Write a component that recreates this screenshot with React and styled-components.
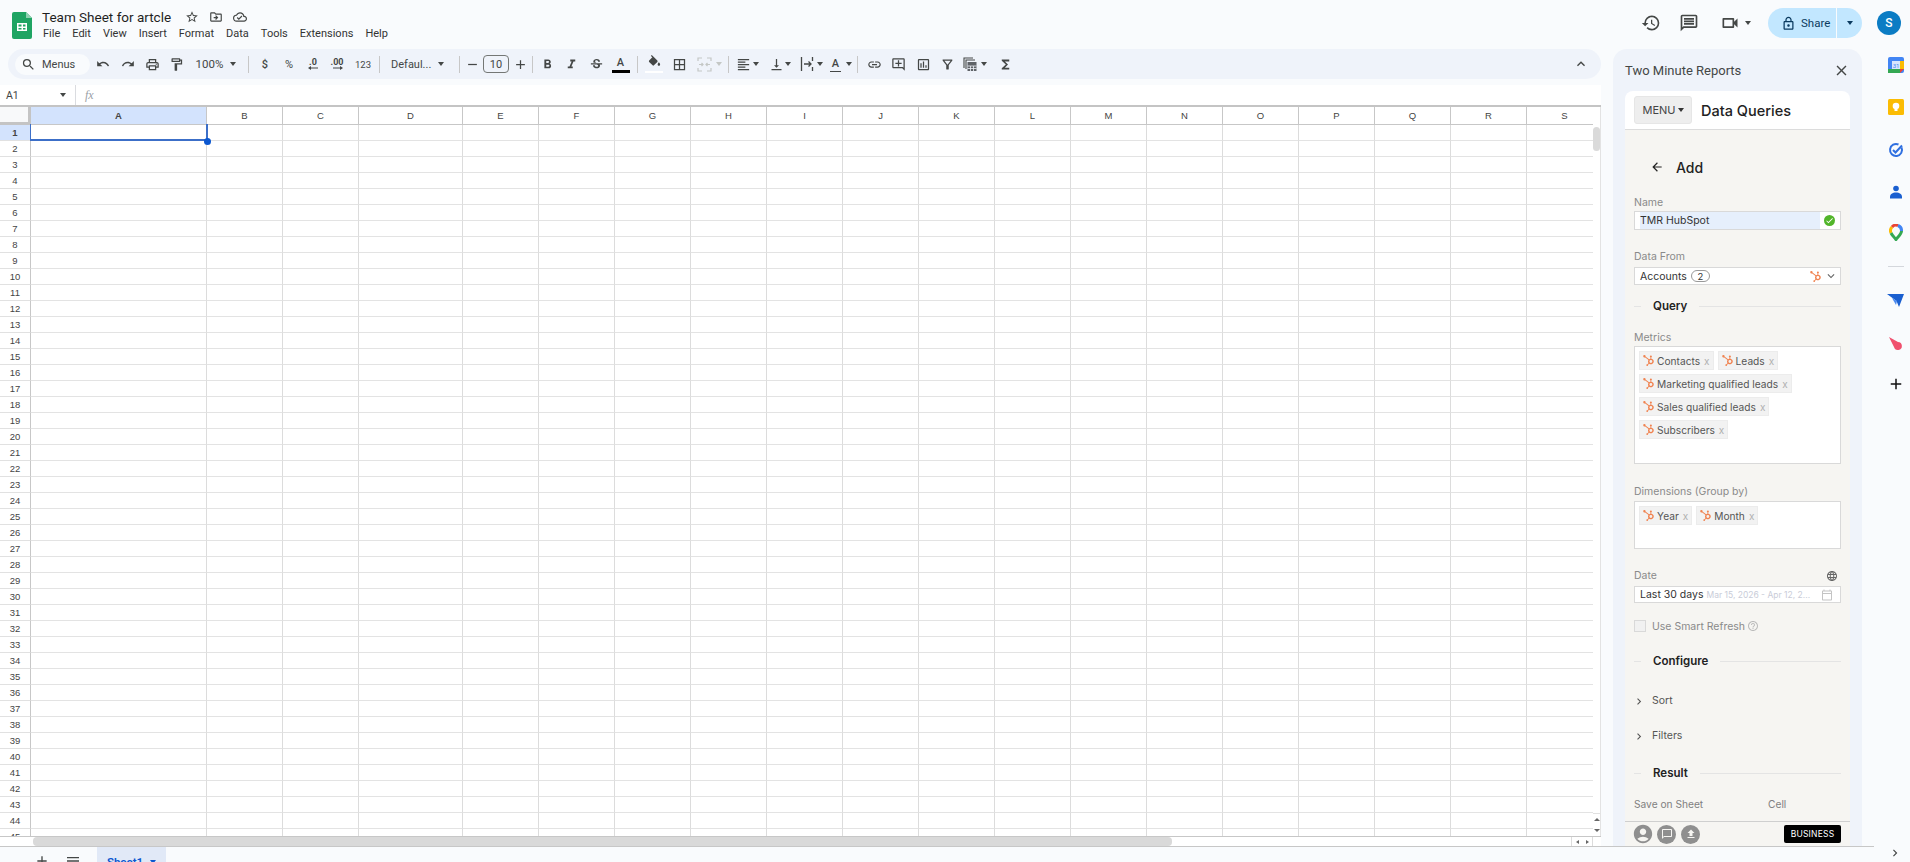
import React from 'react';
import styled, { createGlobalStyle } from 'styled-components';
import {
  MdAdd, MdArrowBack, MdClose, MdExpandLess, MdFormatAlignLeft, MdFormatBold,
  MdFormatItalic, MdBorderAll, MdFunctions, MdHistory, MdKeyboardArrowDown, MdKeyboardArrowRight,
  MdLink, MdAccountCircle, MdOutlineAddComment, MdOutlineCalendarToday, MdOutlineCloudDone,
  MdOutlineDriveFileMove, MdOutlineFilterAlt, MdOutlineFormatPaint, MdOutlineHelpOutline,
  MdOutlineInsertChart, MdOutlineLanguage, MdOutlineLock, MdOutlineMessage, MdOutlinePrint,
  MdOutlineVideocam, MdOutlineVerticalAlignBottom, MdRedo, MdRemove, MdSearch, MdStarBorder,
  MdStrikethroughS, MdUndo, MdCheck, MdMenu, MdFileUpload, MdChatBubbleOutline,
} from 'react-icons/md';
import { SiHubspot } from 'react-icons/si';

const GlobalStyle = createGlobalStyle`
  html, body { margin: 0; padding: 0; height: 862px; overflow: hidden; }
  body { font-family: Roboto, "Liberation Sans", sans-serif; background: #f9fbfd; }
  * { box-sizing: border-box; }
`;

const Page = styled.div`
  width: 1910px;
  height: 862px;
  display: flex;
  flex-direction: column;
  overflow: hidden;
  background: #f9fbfd;
  color: #444746;
`;

/* ---- top header ---- */
const Header = styled.header`
  height: 49px;
  flex: none;
  display: flex;
  align-items: flex-start;
  padding-left: 12px;
`;
const LogoSlot = styled.div`
  margin-top: 12px;
`;
const TitleBlock = styled.div`
  margin-left: 10px;
  padding-top: 8px;
`;
const TitleRow = styled.div`
  display: flex;
  align-items: center;
  height: 18px;
`;
const DocTitle = styled.div`
  font-size: 13.5px;
  color: #1f1f1f;
  width: 138px;
  white-space: nowrap;
`;
const TitleIcon = styled.span`
  width: 24px;
  display: flex;
  justify-content: center;
  font-size: 14px;
  color: #444746;
`;
const MenuRow = styled.nav`
  display: flex;
  gap: 12px;
  padding-left: 1px;
  font-size: 11px;
  line-height: 16px;
  color: #333;
`;
const HeaderRight = styled.div`
  margin-left: auto;
  display: flex;
  align-items: center;
  height: 46px;
  padding-right: 9px;
`;
const HeadIcon = styled.span`
  display: flex;
  align-items: center;
  justify-content: center;
  width: ${(p) => p.$w || 38}px;
  font-size: ${(p) => p.$size || 20}px;
  gap: 5px;
  color: #444746;
`;
const ShareButton = styled.div`
  width: 94px;
  height: 30px;
  margin-left: 6px;
  background: #c2e7ff;
  border-radius: 15px;
  display: flex;
  align-items: center;
  font-size: 11.5px;
  color: #0b3b60;
`;
const ShareMain = styled.div`
  width: 69px;
  height: 30px;
  display: flex;
  align-items: center;
  padding-left: 13px;
  gap: 5px;
  border-right: 1px solid #f9fbfd;
`;
const ShareCaret = styled.div`
  flex: 1;
  display: flex;
  justify-content: center;
`;
const Avatar = styled.div`
  width: 24px;
  height: 24px;
  margin-left: 15px;
  border-radius: 50%;
  background: #0b7cc4;
  color: #fff;
  font-size: 12px;
  font-weight: 500;
  display: flex;
  align-items: center;
  justify-content: center;
`;
const Caret = styled.span`
  display: inline-block;
  width: 0;
  height: 0;
  flex: none;
  border-left: 3.5px solid transparent;
  border-right: 3.5px solid transparent;
  border-top: 4px solid ${(p) => p.$color || '#444746'};
`;

/* ---- main row ---- */
const Main = styled.div`
  height: 797px;
  flex: none;
  display: flex;
`;
const SheetColumn = styled.div`
  width: 1601px;
  flex: none;
  display: flex;
  flex-direction: column;
`;
const Toolbar = styled.div`
  height: 30px;
  flex: none;
  margin-left: 8px;
  background: #eff3fa;
  border-radius: 15px;
  display: flex;
  align-items: center;
  padding-left: 7px;
  position: relative;
`;
const SearchPill = styled.div`
  width: 75px;
  height: 21px;
  background: #f9fbfd;
  border-radius: 11px;
  display: flex;
  align-items: center;
  padding-left: 6px;
  gap: 6px;
  font-size: 11px;
  color: #444746;
  margin-right: 1px;
  svg { font-size: 15px; }
`;
const Tool = styled.span`
  width: ${(p) => p.$w || 24}px;
  margin-left: ${(p) => p.$ml || 0}px;
  height: 22px;
  flex: none;
  display: flex;
  align-items: center;
  justify-content: ${(p) => p.$left ? 'flex-start' : 'center'};
  gap: ${(p) => p.$gap ?? 3}px;
  font-size: ${(p) => p.$size || 15}px;
  color: ${(p) => p.$muted ? '#c4c7c5' : '#444746'};
`;
const ToolText = styled.span`
  font-size: ${(p) => p.$size || 11}px;
  font-weight: ${(p) => p.$weight || 400};
  color: #444746;
  white-space: nowrap;
`;
const Sep = styled.span`
  width: 1px;
  height: 17px;
  flex: none;
  background: #c7c7c7;
  margin: 0 ${(p) => p.$r ?? 4}px 0 ${(p) => p.$l ?? 4}px;
`;
const FontSizeBox = styled.span`
  width: 26px;
  height: 18px;
  flex: none;
  margin-left: 1px;
  border: 1px solid #747775;
  border-radius: 4px;
  font-size: 11px;
  color: #444746;
  display: flex;
  align-items: center;
  justify-content: center;
`;
const ColorA = styled.span`
  display: flex;
  flex-direction: column;
  align-items: center;
  font-size: 11px;
  font-weight: 500;
  line-height: 13px;
  color: #444746;
`;
const ColorBar = styled.span`
  width: ${(p) => p.$w || 18}px;
  height: ${(p) => p.$h || 3}px;
  margin-top: 1px;
  background: ${(p) => p.$color || '#000'};
`;
const Decimal = styled.span`
  display: flex;
  flex-direction: column;
  align-items: center;
  font-size: 9px;
  font-weight: 700;
  line-height: 8px;
  color: #444746;
`;
const CollapseBtn = styled.span`
  position: absolute;
  right: 12px;
  top: 7px;
  font-size: 16px;
  color: #444746;
  display: flex;
`;
const FormulaBar = styled.div`
  height: 22px;
  flex: none;
  margin-top: 6px;
  background: #fff;
  border-bottom: 2px solid #c4c4c4;
  display: flex;
  align-items: center;
  font-size: 10.5px;
  color: #444;
`;
const CellName = styled.div`
  width: 76px;
  height: 20px;
  padding: 0 9px 0 6px;
  display: flex;
  align-items: center;
  justify-content: space-between;
  border-right: 1px solid #dadce0;
`;
const Fx = styled.span`
  margin-left: 9px;
  font-family: "Liberation Serif", serif;
  font-style: italic;
  font-size: 12px;
  color: #9aa0a6;
`;

/* ---- grid ---- */
const GridRow = styled.div`
  flex: 1;
  min-height: 0;
  display: flex;
`;
const Cells = styled.div`
  width: 1593px;
  flex: none;
  overflow: hidden;
  background: #fff;
  display: grid;
  grid-template-columns: 31px 176px 76px 76px 104px repeat(15, 76px);
  grid-template-rows: 18px repeat(45, 16px);
  font-family: "Liberation Sans", Arial, sans-serif;
`;
const ColHead = styled.div`
  display: flex;
  align-items: center;
  justify-content: center;
  font-size: 9.5px;
  font-weight: ${(p) => p.$active ? 700 : 400};
  color: #444;
  background: ${(p) => p.$active ? '#d3e3fd' : '#fff'};
  border-right: 1px solid #c7c7c7;
  border-bottom: 1px solid #c7c7c7;
`;
const Corner = styled.div`
  background: #f8f9fa;
  border-right: 3px solid #c4c4c4;
  border-bottom: 3px solid #c4c4c4;
`;
const RowHead = styled.div`
  display: flex;
  align-items: center;
  justify-content: center;
  font-size: 9.5px;
  font-weight: ${(p) => p.$active ? 700 : 400};
  color: #444;
  background: ${(p) => p.$active ? '#d3e3fd' : '#fff'};
  border-right: 1px solid #c7c7c7;
  border-bottom: 1px solid #e1e1e1;
`;
const Cell = styled.div`
  border-right: 1px solid #dcdcdc;
  border-bottom: 1px solid #e3e3e3;
`;
const SelectedCell = styled(Cell)`
  position: relative;
  overflow: visible;
  z-index: 2;
  &::before {
    content: '';
    position: absolute;
    inset: -1px -2px -1px -1px;
    border: 2px solid #3c6fc8;
    border-top-width: 0;
    border-left-width: 1px;
  }
  &::after {
    content: '';
    position: absolute;
    right: -5px;
    bottom: -5px;
    width: 7px;
    height: 7px;
    border-radius: 50%;
    background: #0b57d0;
  }
`;
const VScroll = styled.div`
  flex: 1;
  background: #fff;
  border-right: 1px solid #e3e3e3;
  padding-top: 20px;
  display: flex;
  flex-direction: column;
`;
const VThumb = styled.div`
  width: 7px;
  height: 24px;
  border-radius: 4px;
  background: #dadada;
`;
const ScrollArrows = styled.div`
  margin-top: auto;
  height: 23px;
  display: flex;
  flex-direction: column;
  align-items: center;
  justify-content: space-around;
  border-top: 1px solid #e1e1e1;
`;
const HScroll = styled.div`
  height: 10px;
  flex: none;
  display: flex;
  align-items: center;
  background: #fff;
  border-top: 1px solid #c7c7c7;
  padding-left: 33px;
`;
const HThumb = styled.div`
  width: 1139px;
  height: 9px;
  border-radius: 4px;
  background: #d9d9d9;
`;
const HArrows = styled.div`
  margin-left: auto;
  margin-right: 8px;
  width: 22px;
  height: 9px;
  display: flex;
  align-items: center;
  justify-content: space-around;
  border-left: 1px solid #dcdcdc;
  border-right: 1px solid #dcdcdc;
`;
const Tiny = styled.span`
  width: 0;
  height: 0;
  border-top: 2.5px solid transparent;
  border-bottom: 2.5px solid transparent;
  border-${(p) => p.$dir === 'left' ? 'right' : 'left'}: 3px solid #666;
`;
const TinyV = styled.span`
  width: 0;
  height: 0;
  border-left: 3px solid transparent;
  border-right: 3px solid transparent;
  border-${(p) => p.$dir === 'up' ? 'bottom' : 'top'}: 3px solid #666;
`;

/* ---- add-on panel ---- */
const Panel = styled.aside`
  width: 249px;
  flex: none;
  margin-left: 12px;
  padding: 0 12px;
  background: #eff3fa;
  border-radius: 14px 14px 0 0;
  display: flex;
  flex-direction: column;
`;
const PanelTitle = styled.div`
  height: 42px;
  flex: none;
  display: flex;
  align-items: center;
  justify-content: space-between;
  font-size: 13px;
  color: #444746;
  svg { font-size: 17px; }
`;
const CardHead = styled.div`
  height: 39px;
  flex: none;
  padding: 5px 9px;
  background: #fff;
  border-radius: 8px 8px 0 0;
  border-bottom: 1px solid #dcdcdc;
  display: flex;
  align-items: center;
  font-family: Inter, sans-serif;
`;
const MenuButton = styled.div`
  width: 58px;
  height: 28px;
  border: 1px solid #e6e6e6;
  border-radius: 3px;
  background: #eee;
  color: #444;
  font-size: 11px;
  display: flex;
  align-items: center;
  justify-content: center;
  gap: 2px;
`;
const CardTitle = styled.div`
  margin-left: 9px;
  font-size: 14.5px;
  font-weight: 500;
  color: #222;
`;
const Body = styled.div`
  flex: 1;
  min-height: 0;
  overflow: hidden;
  padding: 0 9px;
  background: #f6f5f2;
  font-family: Inter, sans-serif;
  font-size: 10.5px;
  color: #444;
`;
const AddRow = styled.div`
  height: 24px;
  margin-top: 25px;
  padding-left: 16px;
  display: flex;
  align-items: center;
  gap: 12px;
  font-size: 14px;
  font-weight: 500;
  color: #222;
`;
const Label = styled.div`
  height: 14px;
  margin-top: ${(p) => p.$mt + 1}px;
  margin-bottom: -1px;
  line-height: 14px;
  font-size: 10.5px;
  color: #8a8a8a;
  display: flex;
  justify-content: space-between;
  align-items: center;
  svg { margin-right: 3px; font-size: 12px; color: #666; }
`;
const Input = styled.div`
  height: ${(p) => p.$h}px;
  margin-top: ${(p) => p.$mt}px;
  padding: 0 5px;
  background: #fff;
  border: 1px solid #d9d9d9;
  display: flex;
  align-items: center;
  color: #333;
  white-space: nowrap;
  overflow: hidden;
`;
const Autofill = styled.div`
  flex: 1;
  height: 100%;
  background: #e6effc;
  display: flex;
  align-items: center;
`;
const StatusDot = styled.span`
  width: 11px;
  height: 11px;
  margin-left: 4px;
  border-radius: 50%;
  background: #52b52a;
  color: #fff;
  font-size: 9px;
  display: flex;
  align-items: center;
  justify-content: center;
`;
const CountBadge = styled.span`
  margin-left: 4px;
  width: 19px;
  height: 12px;
  border: 1px solid #999;
  border-radius: 7px;
  font-size: 9.5px;
  display: flex;
  align-items: center;
  justify-content: center;
`;
const RightIcons = styled.span`
  margin-left: auto;
  margin-right: -3px;
  display: flex;
  align-items: center;
  gap: 3px;
  color: #666;
  font-size: 14px;
`;
const Hub = styled(SiHubspot)`
  flex: none;
  font-size: 11px;
  color: #f0824f;
`;
const SectionTitle = styled.div`
  height: 16px;
  margin-top: ${(p) => p.$mt}px;
  display: flex;
  align-items: center;
  font-size: 11.5px;
  font-weight: 600;
  color: #222;
  &::before {
    content: '';
    width: 7px;
    height: 1px;
    margin-right: 12px;
    background: #e4e4e4;
  }
  &::after {
    content: '';
    flex: 1;
    height: 1px;
    margin-left: 12px;
    background: #e4e4e4;
  }
`;
const TagBox = styled.div`
  height: ${(p) => p.$h}px;
  margin-top: ${(p) => p.$mt}px;
  padding: 4px;
  background: #fff;
  border: 1px solid #d9d9d9;
  display: flex;
  flex-wrap: wrap;
  align-content: flex-start;
  gap: 4px;
`;
const Tag = styled.span`
  height: 19px;
  padding: 0 3px 0 3px;
  background: #f2f2f2;
  border: 1px solid #ececec;
  display: flex;
  align-items: center;
  gap: 3px;
  font-size: 10.2px;
  color: #555;
  white-space: nowrap;
`;
const TagX = styled.span`
  margin-left: 1px;
  font-size: 10px;
  color: #b0b0b0;
`;
const DateHint = styled.span`
  margin-left: 3px;
  flex: 1;
  min-width: 0;
  overflow: hidden;
  font-size: 8.5px;
  color: #c9ccd8;
`;
const CalIcon = styled(MdOutlineCalendarToday)`
  flex: none;
  margin-right: 2px;
  font-size: 12px;
  color: #c4c4c4;
`;
const CheckRow = styled.div`
  height: 14px;
  margin-top: 16px;
  display: flex;
  align-items: center;
  color: #8a8a8a;
  svg { margin-left: 2px; font-size: 12px; color: #bbb; }
`;
const CheckBox = styled.span`
  width: 12px;
  height: 12px;
  margin-right: 6px;
  background: #f1f1f1;
  border: 1px solid #d9d9d9;
`;
const Collapse = styled.div`
  height: 14px;
  margin-top: ${(p) => p.$mt}px;
  display: flex;
  align-items: center;
  color: #555;
  svg { width: 18px; margin: 3px 4px 0 -4px; font-size: 13px; }
`;
const SaveRow = styled.div`
  height: 14px;
  margin-top: 16px;
  display: grid;
  grid-template-columns: 134px auto;
  align-items: center;
  font-size: 10.2px;
  color: #808080;
`;
const PanelFooter = styled.div`
  height: 25px;
  flex: none;
  padding: 0 9px 0 9px;
  background: #f6f5f2;
  border-top: 1px solid #cfcfcf;
  display: flex;
  align-items: center;
  gap: 5px;
  font-family: Inter, sans-serif;
`;
const UserIcon = styled(MdAccountCircle)`
  width: 22px;
  height: 22px;
  margin: 0 -2px;
  color: #8f8f8f;
`;
const RoundIcon = styled.span`
  width: 19px;
  height: 19px;
  border-radius: 50%;
  background: #8f8f8f;
  color: #f6f5f2;
  font-size: 12px;
  display: flex;
  align-items: center;
  justify-content: center;
`;
const PlanBadge = styled.span`
  margin-left: auto;
  width: 57px;
  height: 18px;
  border-radius: 2px;
  background: #000;
  color: #fff;
  font-size: 8.5px;
  letter-spacing: 0.2px;
  display: flex;
  align-items: center;
  justify-content: center;
`;

/* ---- right rail ---- */
const Rail = styled.div`
  width: 48px;
  flex: none;
  margin-top: -5px;
  padding-left: 19px;
  display: flex;
  flex-direction: column;
  align-items: center;
`;
const RailSlot = styled.div`
  height: ${(p) => p.$h || 42}px;
  flex: none;
  display: flex;
  align-items: center;
  justify-content: center;
`;
const RailRule = styled.div`
  width: 16px;
  height: 1px;
  background: #d4d7dc;
`;

/* ---- sheet tabs ---- */
const BottomRow = styled.div`
  height: 16px;
  flex: none;
  display: flex;
  overflow: hidden;
`;
const SheetBar = styled.div`
  width: 1874px;
  flex: none;
  height: 40px;
  border-top: 1px solid #c7c7c7;
  display: flex;
  align-items: flex-start;
  padding-left: 26px;
`;
const BarIcon = styled.span`
  width: 31px;
  height: 26px;
  margin-top: 1px;
  display: flex;
  align-items: center;
  justify-content: center;
  font-size: 16px;
  color: #444746;
`;
const SheetTab = styled.div`
  width: 69px;
  height: 30px;
  margin-left: 9px;
  background: #e1e9f7;
  display: flex;
  align-items: center;
  justify-content: center;
  gap: 7px;
  font-size: 11.5px;
  font-weight: 600;
  color: #0b57d0;
`;
const BarChevron = styled.span`
  flex: 1;
  display: flex;
  justify-content: center;
  padding-left: 5px;
  font-size: 14px;
  color: #444746;
`;

const SheetsLogo = () => (
  <svg width="20" height="27" viewBox="0 0 20 27">
    <path d="M2 0h12l6 6v19a2 2 0 0 1-2 2H2a2 2 0 0 1-2-2V2a2 2 0 0 1 2-2z" fill="#1fa463" />
    <path d="M14 0l6 6h-6z" fill="#8ed1b1" />
    <path d="M5 11h10v8H5zm1.500 1.500v2h3v-2zm4.500 0v2h2.500v-2zm-4.500 3.500v1.500h3V16zm4.500 0v1.500h2.500V16z" fill="#fff" fillRule="evenodd" />
  </svg>
);
const FillBucket = () => (
  <svg width="15" height="15" viewBox="0 0 24 24" fill="#444746">
    <path d="M16.560 8.940L7.620 0 6.210 1.410l2.380 2.380-5.150 5.150c-.59.59-.59 1.540 0 2.120l5.500 5.500c.29.29.68.44 1.060.44s.77-.15 1.060-.44l5.500-5.500c.59-.58.59-1.530 0-2.120z" />
    <path d="M19 11.500s-2 2.170-2 3.500c0 1.100.9 2 2 2s2-.9 2-2c0-1.330-2-3.500-2-3.500z" />
  </svg>
);
const WrapIcon = () => (
  <svg width="14" height="16" viewBox="0 0 14 16" fill="none" stroke="#444746" strokeWidth="1.300">
    <path d="M1.500 1v14M12.500 1v4M12.500 11v4M4 8h7M8.500 5.500 11 8l-2.500 2.500" />
  </svg>
);
const MergeIcon = () => (
  <svg width="15" height="15" viewBox="0 0 15 15" fill="none" stroke="#c4c7c5" strokeWidth="1.200">
    <path d="M1 4V1h4M10 1h4v3M1 11v3h4M10 14h4v-3M2 7.500h4M13 7.500H9M4.500 6l1.500 1.500L4.500 9M10.500 6 9 7.500 10.500 9" />
  </svg>
);
const TableFnIcon = () => (
  <svg width="16" height="16" viewBox="0 0 16 16" fill="none" stroke="#444746" strokeWidth="1.100">
    <path d="M2 12V2h9" />
    <path d="M4 13V4h9" />
    <rect x="5.500" y="6" width="9" height="9" fill="#5f6368" stroke="none" />
    <path d="M5.500 10h9M5.500 12.500h9M8.500 10v5M11.500 10v5" stroke="#eff3fa" strokeWidth="0.800" />
  </svg>
);
const ArrowLeftSmall = () => (
  <svg width="11" height="4" viewBox="0 0 11 4" fill="#444746"><path d="M3 0v1.500h7v1H3V4L0 2z" /></svg>
);
const ArrowRightSmall = () => (
  <svg width="11" height="4" viewBox="0 0 11 4" fill="#444746"><path d="M8 0v1.500H1v1h7V4l3-2z" /></svg>
);

const CalendarIcon = () => (
  <svg width="16" height="16" viewBox="0 0 16 16">
    <rect width="16" height="16" rx="2" fill="#4285f4" />
    <rect x="12" y="4" width="4" height="8" fill="#fbbc04" />
    <rect x="0" y="12" width="12" height="4" fill="#34a853" />
    <path d="M12 12h4l-4 4z" fill="#ea4335" />
    <rect x="4" y="4" width="8" height="8" fill="#d7e5fc" />
    <text x="8" y="10.500" fontSize="6" textAnchor="middle" fill="#4285f4" fontFamily="Roboto, sans-serif">31</text>
  </svg>
);
const KeepIcon = () => (
  <svg width="16" height="16" viewBox="0 0 16 16">
    <rect width="16" height="16" rx="1.500" fill="#fbbc04" />
    <circle cx="8" cy="7" r="3.300" fill="#fff" />
    <rect x="6.500" y="10" width="3" height="2" fill="#fff" />
  </svg>
);
const TasksIcon = () => (
  <svg width="16" height="16" viewBox="0 0 16 16" fill="none" stroke="#2f6fe0" strokeWidth="2">
    <path d="M13.500 5.500A6 6 0 1 1 10.500 2.500" />
    <path d="M5 8l2.500 2.500L14 3.500" />
  </svg>
);
const ContactsIcon = () => (
  <svg width="14" height="14" viewBox="0 0 14 14" fill="#1a5fd0">
    <circle cx="7" cy="3.500" r="2.800" />
    <path d="M1 12c0-3 2.500-4.500 6-4.500s6 1.500 6 4.500v1.500H1z" />
  </svg>
);
const MapsIcon = () => (
  <svg width="14" height="17" viewBox="0 0 14 17" fill="none" strokeWidth="3">
    <path d="M2 9A5.500 5.500 0 0 1 3 3" stroke="#fbbc04" />
    <path d="M3 3a5.500 5.500 0 0 1 6-1.500" stroke="#ea4335" />
    <path d="M9 1.500A5.500 5.500 0 0 1 12.500 7" stroke="#4285f4" />
    <path d="M12.500 7c0 3-3 5.500-5.500 8.500C5 13 3 11 2 9" stroke="#34a853" />
  </svg>
);
const FormArrowIcon = () => (
  <svg width="17" height="15" viewBox="0 0 17 15" fill="#1a5fd0">
    <path d="M0 1h17L12 14 9.500 8z" />
    <path d="M5 5l5 3-1 4z" fill="#4d8bf0" />
  </svg>
);
const CometIcon = () => (
  <svg width="16" height="17" viewBox="0 0 16 17">
    <path d="M1 1l9 5a4 4 0 1 1-4 5z" fill="#f0506e" />
  </svg>
);

const columns = 'ABCDEFGHIJKLMNOPQRS'.split('');
const rows = Array.from({ length: 45 }, (_, i) => i + 1);
const menus = ['File', 'Edit', 'View', 'Insert', 'Format', 'Data', 'Tools', 'Extensions', 'Help'];
const metrics = ['Contacts', 'Leads', 'Marketing qualified leads', 'Sales qualified leads', 'Subscribers'];
const dimensions = ['Year', 'Month'];

function HubTag({ name }) {
  return (
    <Tag>
      <Hub />
      {name}
      <TagX>x</TagX>
    </Tag>
  );
}

function SheetGrid() {
  return (
    <Cells>
      <Corner />
      {columns.map((c) => <ColHead key={c} $active={c === 'A'}>{c}</ColHead>)}
      {rows.map((r) => (
        <React.Fragment key={r}>
          <RowHead $active={r === 1}>{r}</RowHead>
          {columns.map((c) => (
            r === 1 && c === 'A' ? <SelectedCell key={c} /> : <Cell key={c} />
          ))}
        </React.Fragment>
      ))}
    </Cells>
  );
}

function SheetToolbar() {
  return (
    <Toolbar>
      <SearchPill><MdSearch />Menus</SearchPill>
      <Tool $size={14}><MdUndo /></Tool>
      <Tool $w={25} $size={14}><MdRedo /></Tool>
      <Tool><MdOutlinePrint /></Tool>
      <Tool><MdOutlineFormatPaint /></Tool>
      <Tool $w={56} $gap={7}><ToolText $size={11.5}>100%</ToolText><Caret /></Tool>
      <Sep />
      <Tool><ToolText $size={11} $weight={500}>$</ToolText></Tool>
      <Tool><ToolText $size={11}>%</ToolText></Tool>
      <Tool><Decimal>.0<ArrowLeftSmall /></Decimal></Tool>
      <Tool><Decimal>.00<ArrowRightSmall /></Decimal></Tool>
      <Tool $w={28}><ToolText $size={9.5}>123</ToolText></Tool>
      <Sep $l={2} $r={11} />
      <Tool $w={62} $left $gap={7}><ToolText $size={11}>Defaul...</ToolText><Caret /></Tool>
      <Sep $l={6} $r={2} />
      <Tool $w={20}><MdRemove /></Tool>
      <FontSizeBox>10</FontSizeBox>
      <Tool $w={22}><MdAdd /></Tool>
      <Sep $l={1} $r={2} />
      <Tool><MdFormatBold /></Tool>
      <Tool $w={25}><MdFormatItalic /></Tool>
      <Tool><MdStrikethroughS /></Tool>
      <Tool $w={25}><ColorA>A<ColorBar /></ColorA></Tool>
      <Sep />
      <Tool><ColorA><FillBucket /><ColorBar $color="#fff" $h={2} /></ColorA></Tool>
      <Tool $w={26}><MdBorderAll /></Tool>
      <Tool $muted><MergeIcon /></Tool>
      <Tool $w={12} $left><Caret $color="#c4c7c5" /></Tool>
      <Sep $l={0} $r={5} />
      <Tool $w={26} $gap={2}><MdFormatAlignLeft /><Caret /></Tool>
      <Tool $w={30} $ml={5} $gap={1}><MdOutlineVerticalAlignBottom /><Caret /></Tool>
      <Tool $w={30} $ml={1}><WrapIcon /><Caret /></Tool>
      <Tool $w={30} $gap={5}><ColorA>A<ColorBar $w={11} $h={1} $color="#444746" /></ColorA><Caret /></Tool>
      <Sep $l={1} />
      <Tool><MdLink /></Tool>
      <Tool><MdOutlineAddComment /></Tool>
      <Tool $w={26}><MdOutlineInsertChart /></Tool>
      <Tool $w={22}><MdOutlineFilterAlt /></Tool>
      <Tool $w={32}><TableFnIcon /><Caret /></Tool>
      <Tool $w={22} $ml={4}><MdFunctions /></Tool>
      <CollapseBtn><MdExpandLess /></CollapseBtn>
    </Toolbar>
  );
}

function QueryPanel() {
  return (
    <Panel>
      <PanelTitle>Two Minute Reports<MdClose /></PanelTitle>
      <CardHead>
        <MenuButton>MENU<Caret $color="#333" /></MenuButton>
        <CardTitle>Data Queries</CardTitle>
      </CardHead>
      <Body>
        <AddRow><MdArrowBack />Add</AddRow>

        <Label $mt={16}>Name</Label>
        <Input $h={19} $mt={2}>
          <Autofill>TMR HubSpot</Autofill>
          <StatusDot><MdCheck /></StatusDot>
        </Input>

        <Label $mt={19}>Data From</Label>
        <Input $h={18} $mt={4}>
          Accounts
          <CountBadge>2</CountBadge>
          <RightIcons><Hub /><MdKeyboardArrowDown /></RightIcons>
        </Input>

        <SectionTitle $mt={13}>Query</SectionTitle>

        <Label $mt={16}>Metrics</Label>
        <TagBox $h={118} $mt={2}>
          {metrics.map((m) => <HubTag key={m} name={m} />)}
        </TagBox>

        <Label $mt={20}>Dimensions (Group by)</Label>
        <TagBox $h={48} $mt={3}>
          {dimensions.map((d) => <HubTag key={d} name={d} />)}
        </TagBox>

        <Label $mt={19}>Date<MdOutlineLanguage /></Label>
        <Input $h={17} $mt={4}>
          Last 30 days
          <DateHint>Mar 15, 2026 - Apr 12, 2...</DateHint>
          <CalIcon />
        </Input>

        <CheckRow><CheckBox />Use Smart Refresh<MdOutlineHelpOutline /></CheckRow>

        <SectionTitle $mt={20}>Configure</SectionTitle>
        <Collapse $mt={24}><MdKeyboardArrowRight />Sort</Collapse>
        <Collapse $mt={21}><MdKeyboardArrowRight />Filters</Collapse>

        <SectionTitle $mt={23}>Result</SectionTitle>
        <SaveRow><span>Save on Sheet</span><span>Cell</span></SaveRow>
      </Body>
      <PanelFooter>
        <UserIcon />
        <RoundIcon><MdChatBubbleOutline /></RoundIcon>
        <RoundIcon><MdFileUpload /></RoundIcon>
        <PlanBadge>BUSINESS</PlanBadge>
      </PanelFooter>
    </Panel>
  );
}

export default function App() {
  return (
    <Page>
      <GlobalStyle />
      <Header>
        <LogoSlot><SheetsLogo /></LogoSlot>
        <TitleBlock>
          <TitleRow>
            <DocTitle>Team Sheet for artcle</DocTitle>
            <TitleIcon><MdStarBorder /></TitleIcon>
            <TitleIcon><MdOutlineDriveFileMove /></TitleIcon>
            <TitleIcon><MdOutlineCloudDone /></TitleIcon>
          </TitleRow>
          <MenuRow>{menus.map((m) => <span key={m}>{m}</span>)}</MenuRow>
        </TitleBlock>
        <HeaderRight>
          <HeadIcon><MdHistory /></HeadIcon>
          <HeadIcon><MdOutlineMessage /></HeadIcon>
          <HeadIcon $w={54}><MdOutlineVideocam /><Caret /></HeadIcon>
          <ShareButton>
            <ShareMain><MdOutlineLock size={15} />Share</ShareMain>
            <ShareCaret><Caret $color="#0b3b60" /></ShareCaret>
          </ShareButton>
          <Avatar>S</Avatar>
        </HeaderRight>
      </Header>

      <Main>
        <SheetColumn>
          <SheetToolbar />
          <FormulaBar>
            <CellName>A1<Caret /></CellName>
            <Fx>fx</Fx>
          </FormulaBar>
          <GridRow>
            <SheetGrid />
            <VScroll>
              <VThumb />
              <ScrollArrows><TinyV $dir="up" /><TinyV $dir="down" /></ScrollArrows>
            </VScroll>
          </GridRow>
          <HScroll>
            <HThumb />
            <HArrows><Tiny $dir="left" /><Tiny $dir="right" /></HArrows>
          </HScroll>
        </SheetColumn>
        <QueryPanel />
        <Rail>
          <RailSlot><CalendarIcon /></RailSlot>
          <RailSlot><KeepIcon /></RailSlot>
          <RailSlot $h={44}><TasksIcon /></RailSlot>
          <RailSlot $h={40}><ContactsIcon /></RailSlot>
          <RailSlot $h={40}><MapsIcon /></RailSlot>
          <RailSlot $h={28}><RailRule /></RailSlot>
          <RailSlot $h={40}><FormArrowIcon /></RailSlot>
          <RailSlot $h={48}><CometIcon /></RailSlot>
          <RailSlot $h={32}><MdAdd size={18} color="#111" /></RailSlot>
        </Rail>
      </Main>

      <BottomRow>
        <SheetBar>
          <BarIcon><MdAdd /></BarIcon>
          <BarIcon><MdMenu /></BarIcon>
          <SheetTab>Sheet1<Caret $color="#0b57d0" /></SheetTab>
        </SheetBar>
        <BarChevron><MdKeyboardArrowRight /></BarChevron>
      </BottomRow>
    </Page>
  );
}
